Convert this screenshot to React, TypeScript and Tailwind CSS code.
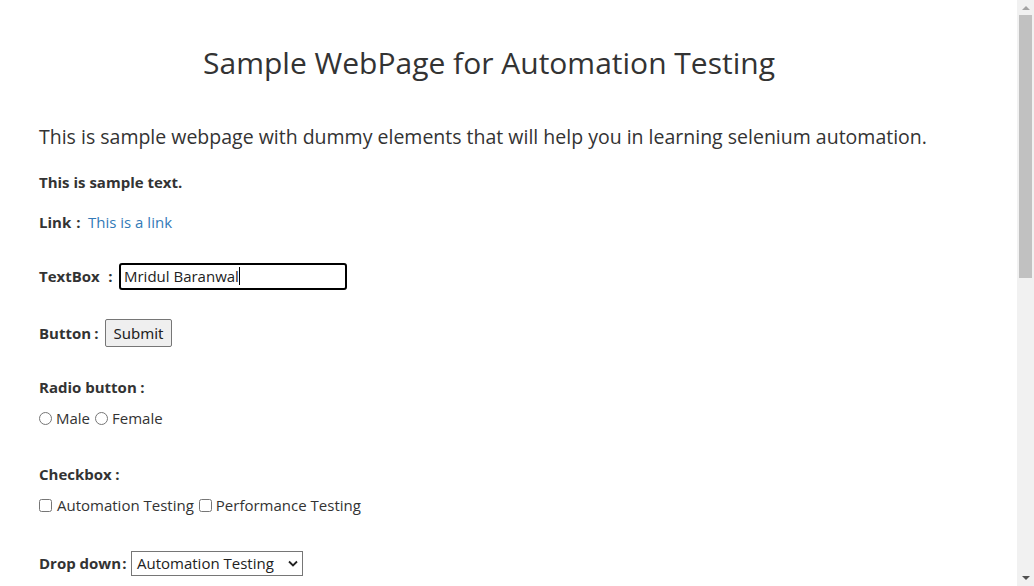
export default function App() {
  return (
    <div className="flex h-[586px] w-[1034px] overflow-hidden bg-white font-['Open_Sans',sans-serif] text-[#333]">
      <main className="flex-1 pl-[39px]">
        <div className="w-[900px]">
          <h1 className="mt-[42px] flex h-[40px] items-center justify-center whitespace-nowrap text-[30px] font-normal">
            Sample WebPage for Automation Testing
          </h1>
          <p className="mt-[40px] flex h-[30px] items-center whitespace-nowrap text-[19.5px]">
            This is sample webpage with dummy elements that will help you in learning selenium automation.
          </p>
          <p className="mt-[18px] flex h-[24px] items-center text-[15px] font-bold">This is sample text.</p>

          <div className="mt-[16px] flex h-[24px] items-center text-[15px]">
            <span className="w-[32px] whitespace-nowrap font-bold">Link</span>
            <span className="w-[12px] pl-[3px] text-center font-bold">:</span>
            <a href="#" className="ml-[5px] text-[15px] text-[#337ab7]">This is a link</a>
          </div>

          <div className="mt-[28px] flex h-[28px] items-center text-[15px]">
            <span className="w-[64px] whitespace-nowrap font-bold">TextBox</span>
            <span className="w-[12px] pl-[3px] text-center font-bold">:</span>
            <div className="ml-[4px] flex h-[27px] w-[228px] items-center rounded-[3px] border-2 border-black px-[3px] text-[15px] text-[#222]">
              <span>Mridul Baranwal</span>
              <span className="h-[18px] w-px bg-black" />
            </div>
          </div>

          <div className="mt-[29px] flex h-[28px] items-center text-[15px]">
            <span className="w-[50px] whitespace-nowrap font-bold">Button</span>
            <span className="w-[12px] pl-[3px] text-center font-bold">:</span>
            <button className="ml-[4px] flex h-[28px] w-[67px] items-center justify-center rounded-[2px] border border-[#767676] bg-[#efefef] font-['Noto_Sans',sans-serif] text-[15px] text-[#222]">
              Submit
            </button>
          </div>

          <div className="mt-[28px] flex h-[24px] items-center text-[15px]">
            <span className="w-[96px] whitespace-nowrap font-bold">Radio button</span>
            <span className="w-[12px] pl-[3px] text-center font-bold">:</span>
          </div>
          <div className="mt-[7px] flex h-[24px] items-center text-[15px]">
            <input type="radio" name="gender" className="m-0 h-[13px] w-[13px]" />
            <span className="ml-[4px]">Male</span>
            <input type="radio" name="gender" className="m-0 ml-[5px] h-[13px] w-[13px]" />
            <span className="ml-[4px]">Female</span>
          </div>

          <div className="mt-[32px] flex h-[24px] items-center text-[15px]">
            <span className="w-[71px] whitespace-nowrap font-bold">Checkbox</span>
            <span className="w-[12px] pl-[3px] text-center font-bold">:</span>
          </div>
          <div className="mt-[7px] flex h-[24px] items-center text-[15px]">
            <input type="checkbox" className="m-0 h-[13px] w-[13px]" />
            <span className="ml-[5px]">Automation Testing</span>
            <input type="checkbox" className="m-0 ml-[5px] h-[13px] w-[13px]" />
            <span className="ml-[4px]">Performance Testing</span>
          </div>

          <div className="mt-[33px] flex h-[26px] items-center text-[15px]">
            <span className="w-[78px] whitespace-nowrap font-bold">Drop down</span>
            <span className="w-[12px] pl-[3px] text-center font-bold">:</span>
            <div className="ml-[2px] flex h-[25px] w-[172px] items-center justify-between border border-[#767676] bg-white pl-[5px] pr-[4px] text-[15px] text-[#222]">
              <span>Automation Testing</span>
              <svg width="10" height="7" viewBox="0 0 10 7" className="text-[#222]">
                <path d="M1 1.5 L5 5.5 L9 1.5" fill="none" stroke="currentColor" strokeWidth="1.8" />
              </svg>
            </div>
          </div>
        </div>
      </main>

      <aside className="flex w-[17px] flex-col bg-[#f1f1f1]">
        <div className="flex h-[15px] items-center justify-center">
          <svg width="8" height="5" viewBox="0 0 8 5">
            <path d="M0 5 L4 1 L8 5 Z" fill="#a3a3a3" />
          </svg>
        </div>
        <div className="mx-[2px] h-[263px] bg-[#c1c1c1]" />
        <div className="flex-1" />
        <div className="flex h-[15px] items-center justify-center">
          <svg width="8" height="5" viewBox="0 0 8 5">
            <path d="M0 0 L8 0 L4 4 Z" fill="#505050" />
          </svg>
        </div>
      </aside>
    </div>
  );
}
